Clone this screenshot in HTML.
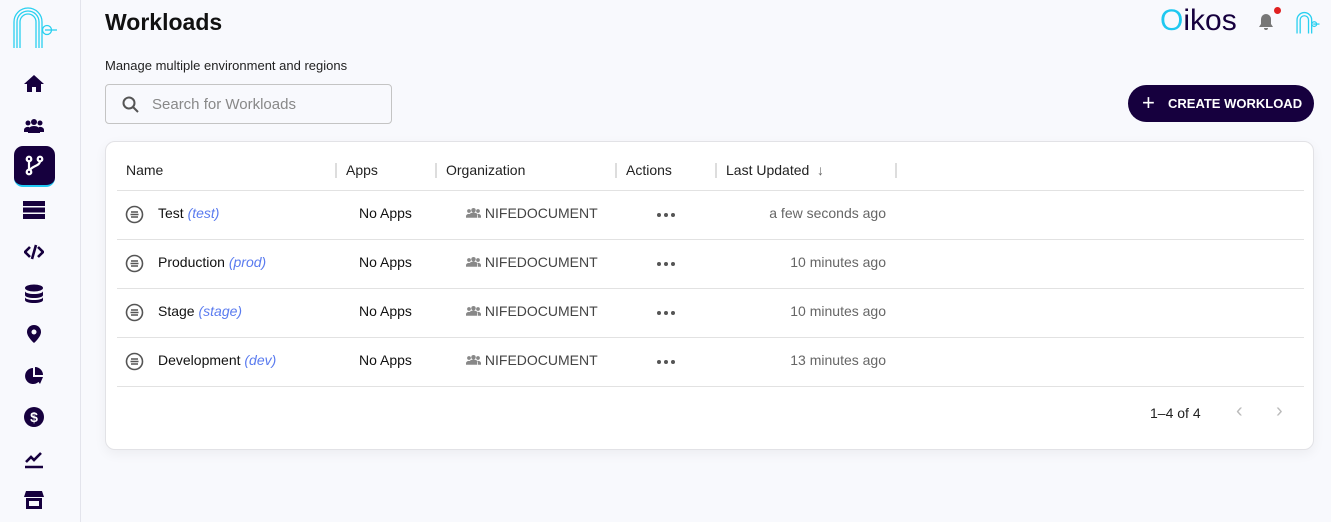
<!DOCTYPE html>
<html><head><style>
*{margin:0;padding:0;box-sizing:border-box}
body{width:1331px;height:522px;background:#f8f9fd;font-family:"Liberation Sans",sans-serif;position:relative;overflow:hidden;color:#111}
.side{position:absolute;left:0;top:0;width:81px;height:522px;border-right:1px solid #e3e4ec}
.ic{position:absolute;left:24px;width:20px;height:20px}
.act{position:absolute;left:14px;top:146px;width:41px;height:41px;border-radius:9px;background:#16003e;border-bottom:2px solid #21c8f2}
h1{position:absolute;left:105px;top:9px;font-size:23px;font-weight:bold;color:#111}
.sub{position:absolute;left:105px;top:58px;font-size:13px;color:#222}
.search{position:absolute;left:105px;top:84px;width:287px;height:40px;border:1px solid #c4c4c4;border-radius:4px;background:#f8f9fd}
.search span{position:absolute;left:46px;top:11px;font-size:15px;color:#888}
.btn{position:absolute;left:1128px;top:85px;width:186px;height:37px;border-radius:19px;background:#16003e;color:#fff;font-size:13px;font-weight:bold;line-height:37px;padding-left:40px}
.btn:before{content:"+";position:absolute;left:14px;top:-1px;font-size:22px;font-weight:normal}
.card{position:absolute;left:105px;top:141px;width:1209px;height:309px;background:#fff;border:1px solid #e2e2e6;border-radius:10px;box-shadow:0 4px 12px rgba(0,0,0,.05)}
.th{position:absolute;top:20px;font-size:14px;color:#222}
.sep{position:absolute;top:21px;width:2px;height:15px;background:#ddd}
.line{position:absolute;left:11px;width:1187px;height:1px;background:#e2e2e2}
.row{position:absolute;left:0;width:100%;height:49px;font-size:14px}
.row div{position:absolute;top:15px}
.nm i{color:#5a7bef}
.org{color:#444}
.tm{color:#666;text-align:right;width:200px;left:580px}
.dots{left:551px;width:18px;height:4px;top:23px!important}
.dots:before,.dots:after,.dots span{content:"";position:absolute;top:0;width:4px;height:4px;border-radius:50%;background:#555}
.dots:before{left:0}.dots span{left:7px}.dots:after{left:14px}
</style></head><body>
<div class="side">
<svg style="position:absolute;left:12px;top:4px" width="46" height="46" viewBox="0 0 46 46" fill="none" stroke="#2ad0f0" stroke-width="1.3"><path d="M2 44V18a14 14 0 0 1 28 0v26"/><path d="M5 44V18a11 11 0 0 1 22 0v26"/><path d="M8 44V18a8 8 0 0 1 16 0v26"/><circle cx="35" cy="26" r="4.5"/><path d="M33 26h12"/></svg>
<svg class="ic" style="top:74px" viewBox="0 0 20 20" fill="#16003e"><path d="M10 1L0 10h3v8h5v-5h4v5h5v-8h3z"/></svg>
<svg class="ic" style="top:116px" viewBox="0 0 20 20" fill="#16003e"><circle cx="10" cy="6" r="3"/><circle cx="4" cy="7" r="2.5"/><circle cx="16" cy="7" r="2.5"/><path d="M4 17v-3a6 4 0 0 1 12 0v3z"/><path d="M0 16v-2a4 3 0 0 1 5-3v5zM20 16v-2a4 3 0 0 0-5-3v5z"/></svg>
<div class="act"><svg style="position:absolute;left:10px;top:9px" width="21" height="22" viewBox="0 0 21 22" fill="none" stroke="#fff" stroke-width="2.2"><circle cx="5" cy="4" r="2.3"/><circle cx="16" cy="4" r="2.3"/><circle cx="5" cy="17" r="2.3"/><path d="M5 6v9M16 6c0 5-8 5-10 9"/></svg></div>
<svg class="ic" style="top:200px;left:23px;width:22px" viewBox="0 0 22 20" fill="#16003e"><rect y="1" width="22" height="5"/><rect y="7.5" width="22" height="5"/><rect y="14" width="22" height="5"/></svg>
<svg class="ic" style="top:242px" viewBox="0 0 20 20" fill="none" stroke="#16003e" stroke-width="2.6"><path d="M6 5l-5 5 5 5M14 5l5 5-5 5M12 3l-4 14"/></svg>
<svg class="ic" style="top:284px" viewBox="0 0 20 20" fill="#16003e"><ellipse cx="10" cy="4" rx="9" ry="3.5"/><path d="M1 7c0 4 18 4 18 0v4c0 4-18 4-18 0zM1 13c0 4 18 4 18 0v3c0 4-18 4-18 0z"/></svg>
<svg class="ic" style="top:324px" viewBox="0 0 20 20" fill="#16003e"><path d="M10 1a7 7 0 0 1 7 7c0 5-7 11-7 11S3 13 3 8a7 7 0 0 1 7-7z"/><circle cx="10" cy="8" r="2.5" fill="#f8f9fd"/></svg>
<svg class="ic" style="top:366px" viewBox="0 0 20 20" fill="#16003e"><path d="M9 2a8 8 0 1 0 8 9H9z"/><path d="M11 1v8h8a8 8 0 0 0-8-8zM11 11h8l-3 7z"/></svg>
<svg class="ic" style="top:407px" viewBox="0 0 20 20"><circle cx="10" cy="10" r="10" fill="#16003e"/><text x="10" y="15" font-size="14" font-weight="bold" fill="#fff" text-anchor="middle" font-family="Liberation Sans">$</text></svg>
<svg class="ic" style="top:449px" viewBox="0 0 20 20" fill="none" stroke="#16003e" stroke-width="2.6"><path d="M2 13l5-5 3 3 7-7"/><path d="M1 18h18"/></svg>
<svg class="ic" style="top:490px" viewBox="0 0 20 20" fill="#16003e"><path d="M2 1h16l2 6H0z"/><path d="M2 8h16v11H2z"/><rect x="5" y="11" width="10" height="5" fill="#f8f9fd"/></svg>
</div>
<h1>Workloads</h1>
<div class="sub">Manage multiple environment and regions</div>
<div class="search"><svg style="position:absolute;left:15px;top:10px" width="20" height="20" viewBox="0 0 20 20" fill="none" stroke="#555" stroke-width="2"><circle cx="8" cy="8" r="5.5"/><path d="M12 12l5 5"/></svg><span>Search for Workloads</span></div>
<div style="position:absolute;left:1160px;top:4px;font-size:30px;color:#16003e"><span style="color:#1ec8f0">O</span>ikos</div>
<svg style="position:absolute;left:1257px;top:12px" width="18" height="20" viewBox="0 0 18 20" fill="#777"><path d="M9 2a5 5 0 0 1 5 5v5l2 3H2l2-3V7a5 5 0 0 1 5-5zM7 16h4a2 2 0 0 1-4 0z"/></svg>
<div style="position:absolute;left:1274px;top:7px;width:7px;height:7px;border-radius:50%;background:#e02020"></div>
<svg style="position:absolute;left:1296px;top:10px" width="24" height="25" viewBox="0 0 46 46" fill="none" stroke="#2ad0f0" stroke-width="2.5"><path d="M2 44V18a14 14 0 0 1 28 0v26"/><path d="M8 44V18a8 8 0 0 1 16 0v26"/><circle cx="35" cy="26" r="4.5"/><path d="M33 26h12"/></svg>
<div class="btn">CREATE WORKLOAD</div>
<div class="card">
<div class="th" style="left:20px">Name</div><div class="sep" style="left:229px"></div>
<div class="th" style="left:240px">Apps</div><div class="sep" style="left:329px"></div>
<div class="th" style="left:340px">Organization</div><div class="sep" style="left:509px"></div>
<div class="th" style="left:520px">Actions</div><div class="sep" style="left:609px"></div>
<div class="th" style="left:620px">Last Updated <span style="color:#666">&nbsp;↓</span></div><div class="sep" style="left:789px"></div>
<div class="line" style="top:48px"></div>
<div class="row" style="top:48px"><svg style="position:absolute;left:19px;top:15px" width="19" height="19" viewBox="0 0 19 19" fill="none" stroke="#555" stroke-width="1.6"><circle cx="9.5" cy="9.5" r="8"/><path d="M6 7h7M5.5 9.5h8M6 12h7"/></svg><div class="nm" style="left:52px">Test <i>(test)</i></div><div style="left:253px">No Apps</div><div class="org" style="left:360px"><svg width="15" height="11" viewBox="0 0 20 14" fill="#888"><circle cx="10" cy="4" r="3"/><circle cx="4" cy="5" r="2.5"/><circle cx="16" cy="5" r="2.5"/><path d="M4 14v-3a6 4 0 0 1 12 0v3zM0 14v-2a4 3 0 0 1 5-3v5zM20 14v-2a4 3 0 0 0-5-3v5z"/></svg> NIFEDOCUMENT</div><div class="dots"><span></span></div><div class="tm">a few seconds ago</div></div>
<div class="line" style="top:97px"></div>
<div class="row" style="top:97px"><svg style="position:absolute;left:19px;top:15px" width="19" height="19" viewBox="0 0 19 19" fill="none" stroke="#555" stroke-width="1.6"><circle cx="9.5" cy="9.5" r="8"/><path d="M6 7h7M5.5 9.5h8M6 12h7"/></svg><div class="nm" style="left:52px">Production <i>(prod)</i></div><div style="left:253px">No Apps</div><div class="org" style="left:360px"><svg width="15" height="11" viewBox="0 0 20 14" fill="#888"><circle cx="10" cy="4" r="3"/><circle cx="4" cy="5" r="2.5"/><circle cx="16" cy="5" r="2.5"/><path d="M4 14v-3a6 4 0 0 1 12 0v3zM0 14v-2a4 3 0 0 1 5-3v5zM20 14v-2a4 3 0 0 0-5-3v5z"/></svg> NIFEDOCUMENT</div><div class="dots"><span></span></div><div class="tm">10 minutes ago</div></div>
<div class="line" style="top:146px"></div>
<div class="row" style="top:146px"><svg style="position:absolute;left:19px;top:15px" width="19" height="19" viewBox="0 0 19 19" fill="none" stroke="#555" stroke-width="1.6"><circle cx="9.5" cy="9.5" r="8"/><path d="M6 7h7M5.5 9.5h8M6 12h7"/></svg><div class="nm" style="left:52px">Stage <i>(stage)</i></div><div style="left:253px">No Apps</div><div class="org" style="left:360px"><svg width="15" height="11" viewBox="0 0 20 14" fill="#888"><circle cx="10" cy="4" r="3"/><circle cx="4" cy="5" r="2.5"/><circle cx="16" cy="5" r="2.5"/><path d="M4 14v-3a6 4 0 0 1 12 0v3zM0 14v-2a4 3 0 0 1 5-3v5zM20 14v-2a4 3 0 0 0-5-3v5z"/></svg> NIFEDOCUMENT</div><div class="dots"><span></span></div><div class="tm">10 minutes ago</div></div>
<div class="line" style="top:195px"></div>
<div class="row" style="top:195px"><svg style="position:absolute;left:19px;top:15px" width="19" height="19" viewBox="0 0 19 19" fill="none" stroke="#555" stroke-width="1.6"><circle cx="9.5" cy="9.5" r="8"/><path d="M6 7h7M5.5 9.5h8M6 12h7"/></svg><div class="nm" style="left:52px">Development <i>(dev)</i></div><div style="left:253px">No Apps</div><div class="org" style="left:360px"><svg width="15" height="11" viewBox="0 0 20 14" fill="#888"><circle cx="10" cy="4" r="3"/><circle cx="4" cy="5" r="2.5"/><circle cx="16" cy="5" r="2.5"/><path d="M4 14v-3a6 4 0 0 1 12 0v3zM0 14v-2a4 3 0 0 1 5-3v5zM20 14v-2a4 3 0 0 0-5-3v5z"/></svg> NIFEDOCUMENT</div><div class="dots"><span></span></div><div class="tm">13 minutes ago</div></div>
<div class="line" style="top:244px"></div>
<div style="position:absolute;left:1044px;top:263px;font-size:14px;color:#222">1–4 of 4</div>
<div style="position:absolute;left:1130px;top:258px;font-size:20px;color:#bbb">‹</div>
<div style="position:absolute;left:1170px;top:258px;font-size:20px;color:#bbb">›</div>
</div>
</body></html>
